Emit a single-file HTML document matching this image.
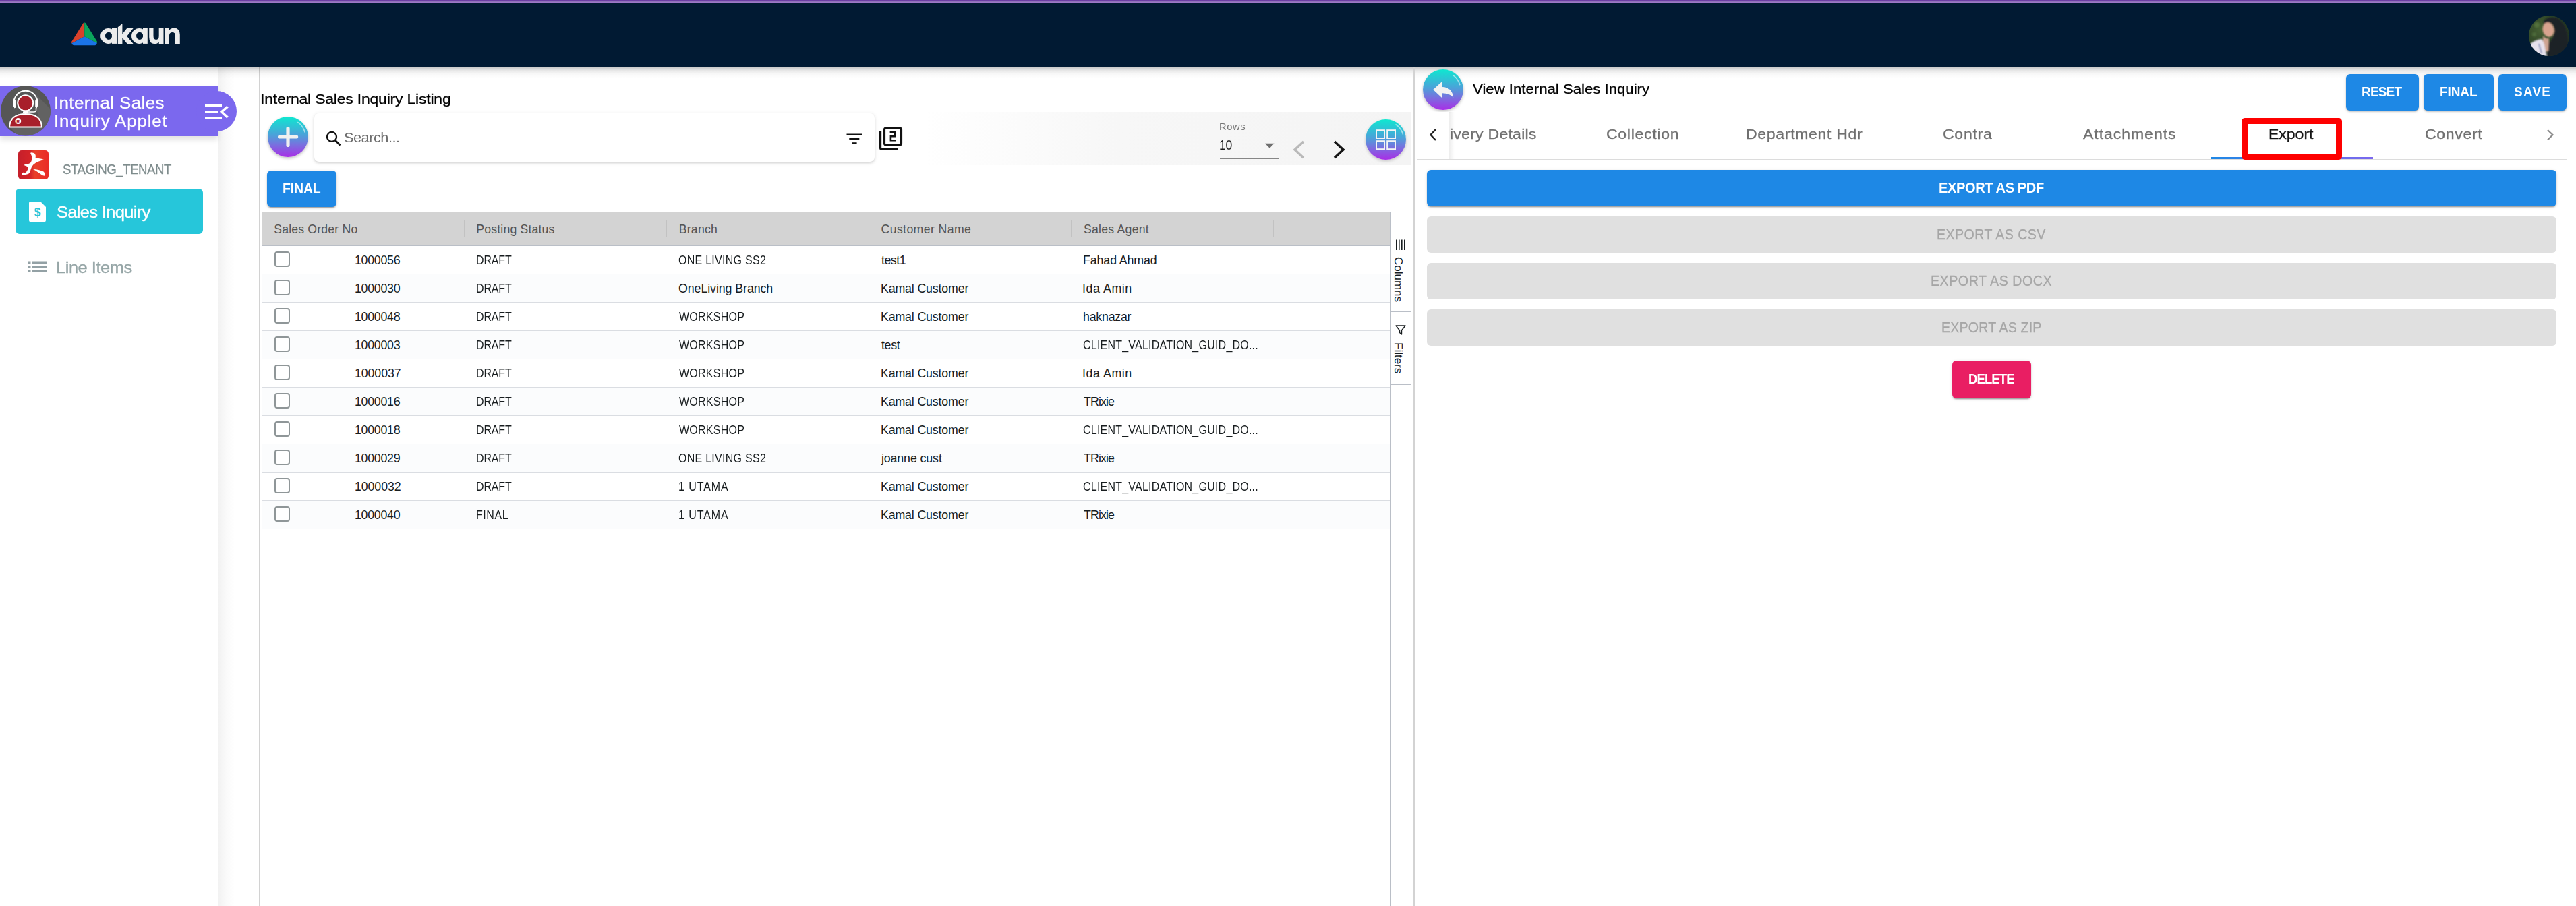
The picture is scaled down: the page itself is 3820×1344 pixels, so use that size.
<!DOCTYPE html>
<html><head><meta charset="utf-8">
<style>
*{box-sizing:border-box;margin:0;padding:0}
html,body{width:3820px;height:1344px;overflow:hidden;background:#fff;font-family:"Liberation Sans",sans-serif}
.a{position:absolute}
.t{position:absolute;white-space:nowrap;line-height:1}
.sx{display:inline-block;transform-origin:0 0}
#topline{left:0;top:0;width:3820px;height:4px;background:linear-gradient(#6b3ea3 0,#6b3ea3 1px,#9070b9 1px,#9070b9 3px,#9d77c8 3px)}
#hdr{left:0;top:4px;width:3820px;height:96px;background:#011a33}
#hdrshadow{left:0;top:100px;width:3820px;height:16px;background:linear-gradient(rgba(0,0,0,.21),rgba(0,0,0,.09) 30%,rgba(0,0,0,.03) 60%,rgba(0,0,0,0))}
#side{left:0;top:100px;width:324px;height:1244px;background:#fff;border-right:1px solid #d9d9d9}
#sideshadow{left:324px;top:100px;width:24px;height:1244px;background:linear-gradient(90deg,#f2f2f2,#fafafa 50%,#fff)}
#midline{left:384px;top:100px;width:1px;height:1244px;background:#d2d2d2}
.btn{position:absolute;background:#1e88e5;border-radius:6px;box-shadow:0 3px 1px -2px rgba(0,0,0,.2),0 2px 2px 0 rgba(0,0,0,.14),0 1px 5px 0 rgba(0,0,0,.12)}
.btxt{position:absolute;color:#fff;font-weight:bold;white-space:nowrap;line-height:1}
.hd{position:absolute;top:329px;font-size:18.5px;color:#585858;white-space:nowrap;line-height:1}
.cell{position:absolute;font-size:18.3px;color:#181d1f;white-space:nowrap;line-height:1}
.rowb{position:absolute;left:389px;width:1672px;height:42px;border-bottom:1px solid #dadde2}
.cb{position:absolute;left:407px;width:23px;height:23px;border:2px solid #8f9698;border-radius:4px;background:#fff}
.tab{position:absolute;top:189px;font-size:21.5px;color:#707070;white-space:nowrap;line-height:1}
.exb{position:absolute;left:2116px;width:1675px;height:54px;border-radius:6px;background:#e0e0e0}
.ext{position:absolute;font-size:22px;color:#a6a6a6;white-space:nowrap;line-height:1}
</style></head>
<body>
<div class="a" id="topline"></div>
<div class="a" id="hdr"></div>

<!-- logo -->
<svg class="a" style="left:100px;top:25px" width="180" height="50" viewBox="100 25 180 50">
  <path d="M125.2 33.6 L125.2 54.3 L106.4 64.3 Q105.6 63 106.6 61.2 L123.3 34.6 Q124.2 33.3 125.2 33.6 Z" fill="#d9412b"/>
  <path d="M125.2 33.6 Q126.3 33.3 127.1 34.6 L143.7 61.2 Q144.6 63 143.9 63.9 L125.2 54.3 Z" fill="#0ba55c"/>
  <path d="M125.2 54.3 L143.9 63.9 Q142.6 67.3 140 67.3 L110 67.3 Q107.2 67.3 106.4 64.3 Z" fill="#1b74e8"/>
  <g fill="#ececec">
  <path fill-rule="evenodd" d="M149.1 53.4 A11.4 11.5 0 1 0 171.9 53.4 A11.4 11.5 0 1 0 149.1 53.4 Z M155.9 53.3 A5.2 5.6 0 1 0 166.3 53.3 A5.2 5.6 0 1 0 155.9 53.3 Z"/>
  <rect x="165.9" y="41.9" width="7.2" height="23"/>
  <path d="M174.8 40.2 L181.4 34.9 L181.4 50.4 L188.2 41.9 L197.6 41.9 L188.2 53.8 L197.6 64.9 L188.7 64.9 L181.4 56.2 L181.4 64.9 L174.8 64.9 Z"/>
  <path fill-rule="evenodd" d="M195 53.4 A11.4 11.5 0 1 0 217.8 53.4 A11.4 11.5 0 1 0 195 53.4 Z M202 53.3 A5.1 5.6 0 1 0 212.2 53.3 A5.1 5.6 0 1 0 202 53.3 Z"/>
  <rect x="212" y="41.9" width="6.8" height="23"/>
  <path d="M221.2 41.9 L227.5 41.9 L227.5 53.5 Q227.5 58.9 231.6 58.9 Q235.7 58.9 235.7 53.5 L235.7 41.9 L242.5 41.9 L242.5 64.9 L235.7 64.9 L235.7 62 Q233.5 65.2 229.5 65.2 Q221.2 65.2 221.2 55 Z"/>
  <path d="M244.2 64.9 L244.2 41.9 L251 41.9 L251 44.8 Q253.2 41.6 257.3 41.6 Q266.8 41.6 266.8 51.5 L266.8 64.9 L260 64.9 L260 52.5 Q260 48 255.5 48 Q251 48 251 52.5 L251 64.9 Z"/>
  </g>
</svg>
<!-- avatar -->
<svg class="a" style="left:3750px;top:23px" width="60" height="60" viewBox="0 0 60 60">
  <defs><clipPath id="avc"><circle cx="30" cy="30" r="30"/></clipPath>
  <radialGradient id="fol" cx="0.3" cy="0.35" r="0.75"><stop offset="0" stop-color="#486234"/><stop offset="0.55" stop-color="#2f4527"/><stop offset="1" stop-color="#22331e"/></radialGradient>
  <filter id="blr"><feGaussianBlur stdDeviation="1.2"/></filter></defs>
  <g clip-path="url(#avc)">
    <rect x="0" y="0" width="60" height="60" fill="url(#fol)"/>
    <g filter="url(#blr)">
    <circle cx="12" cy="14" r="4" fill="#52703c"/><circle cx="8" cy="28" r="3" fill="#4e6b3a"/><circle cx="53" cy="24" r="3" fill="#4f6d3b"/>
    <path d="M22 8 Q32 -1 45 5 Q57 15 58 34 Q60 52 54 62 L26 62 Q29 50 28 42 Q36 36 38 26 Q39 14 32 11 Q26 10 22 14 Z" fill="#1e2125"/>
    <ellipse cx="29" cy="21" rx="8.5" ry="11" transform="rotate(-12 29 21)" fill="#d9a48f"/>
    <path d="M21 30 Q25 35 30 34 L29 52 Q25 56 21 50 Z" fill="#cfa390"/>
    <path d="M0 44 Q8 36 19 35 Q23 40 24 48 L27 62 L0 62 Z" fill="#e7e1ec"/>
    <path d="M15 42 L19 56" stroke="#5a6ea5" stroke-width="1.4"/>
    </g>
  </g>
</svg>
<!-- sidebar -->
<div class="a" id="side"></div>
<div class="a" id="sideshadow"></div>
<div class="a" id="midline"></div>

<div class="a" style="left:0;top:127px;width:323px;height:75px;background:#7b68ee;box-shadow:0 5px 8px rgba(0,0,0,.12)"></div>
<div class="a" style="left:291px;top:135px;width:60px;height:60px;border-radius:50%;background:#7b68ee"></div>
<svg class="a" style="left:0;top:120px" width="90" height="90" viewBox="0 0 90 90">
  <defs><clipPath id="apc"><circle cx="38" cy="44.3" r="37"/></clipPath></defs>
  <circle cx="38" cy="44.3" r="37" fill="#565656"/>
  <path clip-path="url(#apc)" d="M55 22 L95 62 L95 100 L45 100 L14 68.5 L62 68.5 L54 42 Z" fill="#626262"/>
</svg>
<svg class="a" style="left:0;top:120px" width="90" height="90" viewBox="0 0 90 90">
  <path d="M22.3 40 A17.5 17.5 0 1 1 53.7 40" fill="none" stroke="#fff" stroke-width="2"/>
  <rect x="20" y="28" width="3.4" height="11" rx="1.7" fill="#fff"/>
  <rect x="52.2" y="28" width="3.4" height="11" rx="1.7" fill="#fff"/>
  <circle cx="37.7" cy="32.8" r="11.5" fill="#a81f2a" stroke="#fff" stroke-width="2"/>
  <path d="M53.5 40 L53.5 44 Q53.5 46 50 46 L40 46" fill="none" stroke="#fff" stroke-width="1.5"/>
  <rect x="34" y="44.5" width="8" height="3.5" rx="1.7" fill="#fff"/>
  <path d="M14 68.5 Q15 49 38 49 Q61 49 62 68.5 Z" fill="#a81f2a" stroke="#fff" stroke-width="2"/>
  <circle cx="26.8" cy="59.6" r="4.5" fill="#fff"/>
  <text x="26.8" y="62.6" font-size="7" font-weight="bold" text-anchor="middle" fill="#a81f2a" font-family="Liberation Sans">R</text>
</svg>
<svg class="a" style="left:300px;top:150px" width="45" height="32" viewBox="0 0 45 32">
  <rect x="4" y="5" width="25" height="3.8" fill="#fff"/>
  <rect x="4" y="14" width="19.7" height="3.8" fill="#fff"/>
  <rect x="4" y="23" width="25" height="3.8" fill="#fff"/>
  <path d="M37.6 8.2 L28.5 15.9 L37.6 24.1" fill="none" stroke="#fff" stroke-width="3.6"/>
</svg>

<!-- tenant -->
<div class="a" style="left:27px;top:223px;width:45px;height:43px;border-radius:5px;background:linear-gradient(90deg,#c51f2b,#d42428 40%,#e9402a 55%,#ea2b27)"></div>
<svg class="a" style="left:27px;top:223px" width="45" height="43" viewBox="0 0 45 43">
  <path d="M18.8 3.3 Q23 3.6 24.1 4.6 Q26.5 7 25.5 11.9 L30.1 11.9 Q35 12.5 38 13.9 Q34.5 15 32.7 15.8 Q28.5 17 26.1 18.5 Q23 20.5 21.5 22.5 Q19.5 25 18.8 27.8 Q18 30.5 17.5 31.7 Q16.5 34 14.9 35 Q10 36.6 6.2 36.4 Q5.3 35.5 5.6 34.4 L7.6 32.4 L8.2 33.7 Q11 33 12.2 31.7 Q14 29 14.9 26.4 Q14.5 24.5 12.9 23.8 Q10 22.8 8.2 21.8 Q10.5 20.8 12.9 20.5 Q16.5 19.8 18.2 18.5 Q20 16 20.2 13.2 Q20.5 9.5 19.5 7.2 Q18.5 5.2 18.2 4.6 Z" fill="#fff"/>
  <path d="M22.1 28.1 Q26.5 28.3 30.1 29.1 Q35.5 30.3 38 31.7 Q40 34.5 40 37.7 Q38 37.8 36 37 Q33 35 30.1 33 Q26 30 22.1 28.1 Z" fill="#fff"/>
</svg>
<!-- sales inquiry -->
<div class="a" style="left:23px;top:280px;width:278px;height:67px;border-radius:6px;background:#26c6da"></div>
<svg class="a" style="left:43px;top:299px" width="26" height="30" viewBox="0 0 26 30">
  <path d="M2 0 L17 0 L25 8 L25 28 Q25 30 23 30 L2 30 Q0 30 0 28 L0 2 Q0 0 2 0 Z" fill="#fff"/>
  <text x="12.5" y="22.4" font-size="17.5" font-weight="bold" text-anchor="middle" fill="#26c6da" font-family="Liberation Sans">$</text>
</svg>

<!-- line items -->
<svg class="a" style="left:42px;top:387px" width="28" height="18" viewBox="0 0 28 18">
  <rect x="0" y="0.5" width="3.5" height="3.5" fill="#93a1a5"/><rect x="6" y="0.5" width="22" height="3.5" fill="#93a1a5"/>
  <rect x="0" y="7" width="3.5" height="3.5" fill="#93a1a5"/><rect x="6" y="7" width="22" height="3.5" fill="#93a1a5"/>
  <rect x="0" y="13.5" width="3.5" height="3.5" fill="#93a1a5"/><rect x="6" y="13.5" width="22" height="3.5" fill="#93a1a5"/>
</svg>

<div class="a" id="hdrshadow"></div>
<!-- listing panel -->
<!-- plus button -->
<div class="a" style="left:397px;top:173px;width:60px;height:60px;border-radius:50%;background:linear-gradient(#0ee8d0,#4aa3d9 45%,#7a6fdf 70%,#a82ee6);box-shadow:0 2px 4px rgba(0,0,0,.25)"></div>
<svg class="a" style="left:397px;top:173px" width="60" height="60" viewBox="0 0 60 60">
  <path d="M17.6 30 L42.6 30 M30 17.6 L30 42.4" stroke="#f0f0f0" stroke-width="5.2" stroke-linecap="round"/>
  <path d="M44.3 8.1 A25.5 25.5 0 0 1 55.1 23.5" fill="none" stroke="rgba(255,255,255,.55)" stroke-width="1.6"/>
</svg>
<!-- search -->
<div class="a" style="left:466px;top:168px;width:831px;height:72px;border-radius:7px;background:#fff;box-shadow:0 2px 4px -1px rgba(0,0,0,.2),0 1px 6px 0 rgba(0,0,0,.1)"></div>
<svg class="a" style="left:480px;top:192px" width="28" height="28" viewBox="0 0 28 28">
  <circle cx="12" cy="10.9" r="7" fill="none" stroke="#111" stroke-width="2.3"/>
  <path d="M17 16 L24.5 23.5" stroke="#111" stroke-width="2.6"/>
</svg>
<svg class="a" style="left:1250px;top:195px" width="34" height="22" viewBox="0 0 34 22">
  <rect x="5.5" y="3.5" width="22.6" height="2.3" fill="#111"/>
  <rect x="9.3" y="9.8" width="15" height="2.3" fill="#111"/>
  <rect x="13" y="16.2" width="7.6" height="2.3" fill="#111"/>
</svg>
<svg class="a" style="left:1300px;top:185px" width="42" height="40" viewBox="0 0 42 40">
  <rect x="11.5" y="5" width="25" height="25" rx="2.5" fill="none" stroke="#111" stroke-width="3.2"/>
  <path d="M5.6 9.6 L5.6 34.4 Q5.6 36 7.2 36 L31.3 36" fill="none" stroke="#111" stroke-width="3.2"/>
  <path d="M19.6 11.2 L26.8 11.2 L26.8 17.2 L20.9 17.2 L20.9 23.2 L28 23.2" fill="none" stroke="#111" stroke-width="2.6"/>
</svg>
<!-- pagination band -->
<div class="a" style="left:1370px;top:166px;width:723px;height:79px;background:linear-gradient(90deg,rgba(245,245,245,0),#f7f7f7 40%,#f4f4f4)"></div>
<svg class="a" style="left:1870px;top:208px" width="24" height="16" viewBox="0 0 24 16"><path d="M6 4.8 L19.6 4.8 L12.8 11.8 Z" fill="#6f6f6f"/></svg>
<div class="a" style="left:1809px;top:234px;width:87px;height:2px;background:#868686"></div>
<svg class="a" style="left:1910px;top:205px" width="30" height="34" viewBox="0 0 30 34"><path d="M23 5 L10 17 L23 29" fill="none" stroke="#b9b9b9" stroke-width="3.6"/></svg>
<svg class="a" style="left:1970px;top:205px" width="30" height="34" viewBox="0 0 30 34"><path d="M9 5 L22 17 L9 29" fill="none" stroke="#151515" stroke-width="3.6"/></svg>
<div class="a" style="left:2025px;top:176.5px;width:60px;height:60px;border-radius:50%;background:linear-gradient(#0ee8d0,#4aa3d9 45%,#7a6fdf 70%,#a82ee6);box-shadow:0 2px 4px rgba(0,0,0,.2)"></div>
<svg class="a" style="left:2025px;top:176px" width="61" height="61" viewBox="0 0 61 61">
  <rect x="16.1" y="17.1" width="12" height="12" fill="none" stroke="#f4f4f4" stroke-width="1.8"/>
  <rect x="32.1" y="17.1" width="12" height="12" fill="none" stroke="#f4f4f4" stroke-width="1.8"/>
  <rect x="16.1" y="33.1" width="12" height="12" fill="none" stroke="#f4f4f4" stroke-width="1.8"/>
  <rect x="32.1" y="33.1" width="12" height="12" fill="none" stroke="#f4f4f4" stroke-width="1.8"/>
  <path d="M44.5 8.5 A25.5 25.5 0 0 1 55.5 23.5" fill="none" stroke="rgba(255,255,255,.55)" stroke-width="1.6"/>
</svg>
<!-- FINAL button -->
<div class="btn" style="left:396px;top:253px;width:103px;height:54px"></div>

<!-- table -->
<div class="a" style="left:388px;top:314px;width:1705px;height:1030px;border:1px solid #babfc7;border-bottom:none"></div>
<div class="a" style="left:389px;top:315px;width:1672px;height:50px;background:#d3d3d3;border-bottom:1px solid #babfc7"></div>
<div class="a" style="left:688px;top:327px;width:1px;height:24px;background:#c2c2c2"></div>
<div class="a" style="left:988px;top:327px;width:1px;height:24px;background:#c2c2c2"></div>
<div class="a" style="left:1288px;top:327px;width:1px;height:24px;background:#c2c2c2"></div>
<div class="a" style="left:1588px;top:327px;width:1px;height:24px;background:#c2c2c2"></div>
<div class="a" style="left:1888px;top:327px;width:1px;height:24px;background:#c2c2c2"></div>
<!-- side bar -->
<div class="a" style="left:2061px;top:315px;width:1px;height:1029px;background:#babfc7"></div>
<div class="a" style="left:2062px;top:339px;width:30px;height:1px;background:#babfc7"></div>
<div class="a" style="left:2062px;top:462px;width:30px;height:1px;background:#babfc7"></div>
<div class="a" style="left:2062px;top:570px;width:30px;height:1px;background:#babfc7"></div>
<svg class="a" style="left:2062px;top:340px" width="30" height="232" viewBox="0 0 30 232">
  <rect x="8" y="15.5" width="1.6" height="15.5" fill="#181d1f"/>
  <rect x="12" y="15.5" width="1.6" height="15.5" fill="#181d1f"/>
  <rect x="16" y="15.5" width="1.6" height="15.5" fill="#181d1f"/>
  <rect x="20" y="15.5" width="1.6" height="15.5" fill="#181d1f"/>
  <path d="M8 143 L22 143 L16.5 150 L16.5 156 L13.5 153.5 L13.5 150 Z" fill="none" stroke="#181d1f" stroke-width="1.4" stroke-linejoin="round"/>
</svg>
<div class="rowb" style="top:365px;background:#fff"></div>
<div class="cb" style="top:373px"></div>
<div class="rowb" style="top:407px;background:#fbfcfd"></div>
<div class="cb" style="top:415px"></div>
<div class="rowb" style="top:449px;background:#fff"></div>
<div class="cb" style="top:457px"></div>
<div class="rowb" style="top:491px;background:#fbfcfd"></div>
<div class="cb" style="top:499px"></div>
<div class="rowb" style="top:533px;background:#fff"></div>
<div class="cb" style="top:541px"></div>
<div class="rowb" style="top:575px;background:#fbfcfd"></div>
<div class="cb" style="top:583px"></div>
<div class="rowb" style="top:617px;background:#fff"></div>
<div class="cb" style="top:625px"></div>
<div class="rowb" style="top:659px;background:#fbfcfd"></div>
<div class="cb" style="top:667px"></div>
<div class="rowb" style="top:701px;background:#fff"></div>
<div class="cb" style="top:709px"></div>
<div class="rowb" style="top:743px;background:#fbfcfd"></div>
<div class="cb" style="top:751px"></div>

<!-- right panel -->
<div class="a" style="left:2096px;top:100px;width:2px;height:1244px;background:#d3d3d3"></div>
<div class="a" style="left:3809px;top:100px;width:1px;height:1244px;background:#cfcfcf"></div>
<!-- back button -->
<div class="a" style="left:2110px;top:103px;width:60px;height:60px;border-radius:50%;background:linear-gradient(#0ee8d0,#4aa3d9 45%,#7a6fdf 70%,#a82ee6);box-shadow:0 2px 4px rgba(0,0,0,.25)"></div>
<svg class="a" style="left:2110px;top:103px" width="60" height="60" viewBox="0 0 60 60">
  <path d="M15.2 30 L28.9 17.6 L28.9 26 Q43 26.5 45.2 41.4 Q39 35.3 28.9 35.3 L28.9 42.8 Z" fill="#f2f2f2"/>
  <path d="M44.3 8.3 A25 25 0 0 1 54.9 23.3" fill="none" stroke="rgba(255,255,255,.55)" stroke-width="1.6"/>
</svg>
<!-- top buttons -->
<div class="btn" style="left:3479px;top:110px;width:108px;height:54px"></div>
<div class="btn" style="left:3594px;top:110px;width:104px;height:54px"></div>
<div class="btn" style="left:3705px;top:110px;width:101px;height:54px"></div>
<!-- tabs -->
<div class="a" style="left:2101px;top:236px;width:1705px;height:1px;background:#dcdcdc"></div>
<div class="a" style="left:2101px;top:166px;width:48px;height:70px;background:#fff;z-index:5"></div><div class="a" style="left:2149px;top:166px;width:8px;height:70px;background:linear-gradient(90deg,rgba(0,0,0,.07),rgba(0,0,0,0));z-index:5"></div>
<svg class="a" style="left:2112px;top:188px;z-index:6" width="24" height="24" viewBox="0 0 24 24"><path d="M17 4 L9.5 12 L17 20" fill="none" stroke="#222" stroke-width="2.4"/></svg>
<svg class="a" style="left:3770px;top:188px" width="24" height="24" viewBox="0 0 24 24"><path d="M8 5 L15.5 12 L8 19.5" fill="none" stroke="#8a8a8a" stroke-width="2.2"/></svg>
<div class="a" style="left:3278px;top:233px;width:241px;height:3px;background:linear-gradient(90deg,#1e88e5,#7b68ee)"></div>
<div class="a" style="left:3324px;top:175px;width:149px;height:62px;border:9px solid #fe0000;border-radius:5px"></div>
<!-- export buttons -->
<div class="exb" style="top:252px;background:#1e88e5;box-shadow:0 3px 1px -2px rgba(0,0,0,.2),0 2px 2px 0 rgba(0,0,0,.14),0 1px 5px 0 rgba(0,0,0,.12)"></div>
<div class="exb" style="top:321px"></div>
<div class="exb" style="top:390px"></div>
<div class="exb" style="top:459px"></div>
<div class="btn" style="left:2895px;top:535px;width:117px;height:56px;background:#e91e63"></div>

<div class="t" style="left:80.40px;top:141.84px;font-size:23.5px;font-weight:normal;color:#fff;-webkit-text-stroke:0.3px #fff;"><span class="sx" style="transform:scaleX(1.1);letter-spacing:0.371px">Internal Sales</span></div>
<div class="t" style="left:80.40px;top:169.04px;font-size:23.5px;font-weight:normal;color:#fff;-webkit-text-stroke:0.3px #fff;"><span class="sx" style="transform:scaleX(1.1);letter-spacing:0.769px">Inquiry Applet</span></div>
<div class="t" style="left:92.55px;top:242.40px;font-size:19.6px;font-weight:normal;color:#7f8c8d;-webkit-text-stroke:0.3px #7f8c8d;"><span class="sx" style="transform:scaleX(0.95);letter-spacing:-0.466px">STAGING_TENANT</span></div>
<div class="t" style="left:84.40px;top:303.96px;font-size:23.3px;font-weight:normal;color:#fff;-webkit-text-stroke:0.3px #fff;"><span class="sx" style="transform:scaleX(1.1);letter-spacing:-0.674px">Sales Inquiry</span></div>
<div class="t" style="left:83.30px;top:385.97px;font-size:23.2px;font-weight:normal;color:#95a5a6;-webkit-text-stroke:0.3px #95a5a6;"><span class="sx" style="transform:scaleX(1.1);letter-spacing:-0.444px">Line Items</span></div>
<div class="t" style="left:386.40px;top:137.14px;font-size:20.9px;font-weight:normal;color:#000;-webkit-text-stroke:0.3px #000;"><span class="sx" style="transform:scaleX(1.1);letter-spacing:-0.188px">Internal Sales Inquiry Listing</span></div>
<div class="t" style="left:510.42px;top:194.23px;font-size:20.2px;font-weight:normal;color:#6e6e6e;"><span class="sx" style="transform:scaleX(1.08);letter-spacing:-0.491px">Search...</span></div>
<div class="t" style="left:1807.95px;top:181.35px;font-size:14px;font-weight:normal;color:#757575;"><span class="sx" style="transform:scaleX(1.05);letter-spacing:0.571px">Rows</span></div>
<div class="t" style="left:1808.10px;top:206.31px;font-size:19.5px;font-weight:normal;color:#1a1a1a;"><span class="sx" style="transform:scaleX(0.9);letter-spacing:-0.222px">10</span></div>
<div class="t" style="left:418.70px;top:269.05px;font-size:21.7px;font-weight:bold;color:#fff;"><span class="sx" style="transform:scaleX(0.9);letter-spacing:-0.194px">FINAL</span></div>
<div class="t" style="left:406.20px;top:332.32px;font-size:17.7px;font-weight:normal;color:#545454;"><span class="sx" style="transform:scaleX(1.0);letter-spacing:0.169px">Sales Order No</span></div>
<div class="t" style="left:706.30px;top:332.32px;font-size:17.7px;font-weight:normal;color:#545454;"><span class="sx" style="transform:scaleX(1.0);letter-spacing:0.162px">Posting Status</span></div>
<div class="t" style="left:1006.70px;top:332.32px;font-size:17.7px;font-weight:normal;color:#545454;"><span class="sx" style="transform:scaleX(1.0);letter-spacing:0.240px">Branch</span></div>
<div class="t" style="left:1306.50px;top:332.32px;font-size:17.7px;font-weight:normal;color:#545454;"><span class="sx" style="transform:scaleX(1.0);letter-spacing:0.383px">Customer Name</span></div>
<div class="t" style="left:1607.00px;top:332.32px;font-size:17.7px;font-weight:normal;color:#545454;"><span class="sx" style="transform:scaleX(1.0);letter-spacing:0.230px">Sales Agent</span></div>
<div class="t" style="left:526.00px;top:378.11px;font-size:17.8px;font-weight:normal;color:#181d1f;"><span class="sx" style="transform:scaleX(1.0);letter-spacing:-0.267px">1000056</span></div>
<div class="t" style="left:706.10px;top:378.11px;font-size:17.8px;font-weight:normal;color:#181d1f;"><span class="sx" style="transform:scaleX(0.9);letter-spacing:-0.167px">DRAFT</span></div>
<div class="t" style="left:1006.10px;top:378.11px;font-size:17.8px;font-weight:normal;color:#181d1f;"><span class="sx" style="transform:scaleX(0.9);letter-spacing:0.299px">ONE LIVING SS2</span></div>
<div class="t" style="left:1307.00px;top:378.11px;font-size:17.8px;font-weight:normal;color:#181d1f;"><span class="sx" style="transform:scaleX(1.0);letter-spacing:-0.500px">test1</span></div>
<div class="t" style="left:1606.00px;top:378.11px;font-size:17.8px;font-weight:normal;color:#181d1f;"><span class="sx" style="transform:scaleX(1.0);letter-spacing:-0.100px">Fahad Ahmad</span></div>
<div class="t" style="left:526.00px;top:420.11px;font-size:17.8px;font-weight:normal;color:#181d1f;"><span class="sx" style="transform:scaleX(1.0);letter-spacing:-0.267px">1000030</span></div>
<div class="t" style="left:706.10px;top:420.11px;font-size:17.8px;font-weight:normal;color:#181d1f;"><span class="sx" style="transform:scaleX(0.9);letter-spacing:-0.167px">DRAFT</span></div>
<div class="t" style="left:1006.00px;top:420.11px;font-size:17.8px;font-weight:normal;color:#181d1f;"><span class="sx" style="transform:scaleX(1.0);letter-spacing:-0.073px">OneLiving Branch</span></div>
<div class="t" style="left:1306.00px;top:420.11px;font-size:17.8px;font-weight:normal;color:#181d1f;"><span class="sx" style="transform:scaleX(1.0);letter-spacing:-0.154px">Kamal Customer</span></div>
<div class="t" style="left:1605.00px;top:420.11px;font-size:17.8px;font-weight:normal;color:#181d1f;"><span class="sx" style="transform:scaleX(1.0);letter-spacing:0.571px">Ida Amin</span></div>
<div class="t" style="left:526.00px;top:462.11px;font-size:17.8px;font-weight:normal;color:#181d1f;"><span class="sx" style="transform:scaleX(1.0);letter-spacing:-0.267px">1000048</span></div>
<div class="t" style="left:706.10px;top:462.11px;font-size:17.8px;font-weight:normal;color:#181d1f;"><span class="sx" style="transform:scaleX(0.9);letter-spacing:-0.167px">DRAFT</span></div>
<div class="t" style="left:1007.00px;top:462.11px;font-size:17.8px;font-weight:normal;color:#181d1f;"><span class="sx" style="transform:scaleX(0.9);letter-spacing:0.270px">WORKSHOP</span></div>
<div class="t" style="left:1306.00px;top:462.11px;font-size:17.8px;font-weight:normal;color:#181d1f;"><span class="sx" style="transform:scaleX(1.0);letter-spacing:-0.154px">Kamal Customer</span></div>
<div class="t" style="left:1606.00px;top:462.11px;font-size:17.8px;font-weight:normal;color:#181d1f;"><span class="sx" style="transform:scaleX(1.0);letter-spacing:-0.229px">haknazar</span></div>
<div class="t" style="left:526.00px;top:504.11px;font-size:17.8px;font-weight:normal;color:#181d1f;"><span class="sx" style="transform:scaleX(1.0);letter-spacing:-0.267px">1000003</span></div>
<div class="t" style="left:706.10px;top:504.11px;font-size:17.8px;font-weight:normal;color:#181d1f;"><span class="sx" style="transform:scaleX(0.9);letter-spacing:-0.167px">DRAFT</span></div>
<div class="t" style="left:1007.00px;top:504.11px;font-size:17.8px;font-weight:normal;color:#181d1f;"><span class="sx" style="transform:scaleX(0.9);letter-spacing:0.270px">WORKSHOP</span></div>
<div class="t" style="left:1307.00px;top:504.11px;font-size:17.8px;font-weight:normal;color:#181d1f;"><span class="sx" style="transform:scaleX(1.0);letter-spacing:-0.333px">test</span></div>
<div class="t" style="left:1606.10px;top:504.11px;font-size:17.8px;font-weight:normal;color:#181d1f;"><span class="sx" style="transform:scaleX(0.9);letter-spacing:0.247px">CLIENT_VALIDATION_GUID_DO...</span></div>
<div class="t" style="left:526.00px;top:546.11px;font-size:17.8px;font-weight:normal;color:#181d1f;"><span class="sx" style="transform:scaleX(1.0);letter-spacing:-0.100px">1000037</span></div>
<div class="t" style="left:706.10px;top:546.11px;font-size:17.8px;font-weight:normal;color:#181d1f;"><span class="sx" style="transform:scaleX(0.9);letter-spacing:-0.167px">DRAFT</span></div>
<div class="t" style="left:1007.00px;top:546.11px;font-size:17.8px;font-weight:normal;color:#181d1f;"><span class="sx" style="transform:scaleX(0.9);letter-spacing:0.270px">WORKSHOP</span></div>
<div class="t" style="left:1306.00px;top:546.11px;font-size:17.8px;font-weight:normal;color:#181d1f;"><span class="sx" style="transform:scaleX(1.0);letter-spacing:-0.154px">Kamal Customer</span></div>
<div class="t" style="left:1605.00px;top:546.11px;font-size:17.8px;font-weight:normal;color:#181d1f;"><span class="sx" style="transform:scaleX(1.0);letter-spacing:0.571px">Ida Amin</span></div>
<div class="t" style="left:526.00px;top:588.11px;font-size:17.8px;font-weight:normal;color:#181d1f;"><span class="sx" style="transform:scaleX(1.0);letter-spacing:-0.267px">1000016</span></div>
<div class="t" style="left:706.10px;top:588.11px;font-size:17.8px;font-weight:normal;color:#181d1f;"><span class="sx" style="transform:scaleX(0.9);letter-spacing:-0.167px">DRAFT</span></div>
<div class="t" style="left:1007.00px;top:588.11px;font-size:17.8px;font-weight:normal;color:#181d1f;"><span class="sx" style="transform:scaleX(0.9);letter-spacing:0.270px">WORKSHOP</span></div>
<div class="t" style="left:1306.00px;top:588.11px;font-size:17.8px;font-weight:normal;color:#181d1f;"><span class="sx" style="transform:scaleX(1.0);letter-spacing:-0.154px">Kamal Customer</span></div>
<div class="t" style="left:1607.00px;top:588.11px;font-size:17.8px;font-weight:normal;color:#181d1f;"><span class="sx" style="transform:scaleX(1.0);letter-spacing:-0.880px">TRixie</span></div>
<div class="t" style="left:526.00px;top:630.11px;font-size:17.8px;font-weight:normal;color:#181d1f;"><span class="sx" style="transform:scaleX(1.0);letter-spacing:-0.267px">1000018</span></div>
<div class="t" style="left:706.10px;top:630.11px;font-size:17.8px;font-weight:normal;color:#181d1f;"><span class="sx" style="transform:scaleX(0.9);letter-spacing:-0.167px">DRAFT</span></div>
<div class="t" style="left:1007.00px;top:630.11px;font-size:17.8px;font-weight:normal;color:#181d1f;"><span class="sx" style="transform:scaleX(0.9);letter-spacing:0.270px">WORKSHOP</span></div>
<div class="t" style="left:1306.00px;top:630.11px;font-size:17.8px;font-weight:normal;color:#181d1f;"><span class="sx" style="transform:scaleX(1.0);letter-spacing:-0.154px">Kamal Customer</span></div>
<div class="t" style="left:1606.10px;top:630.11px;font-size:17.8px;font-weight:normal;color:#181d1f;"><span class="sx" style="transform:scaleX(0.9);letter-spacing:0.247px">CLIENT_VALIDATION_GUID_DO...</span></div>
<div class="t" style="left:526.00px;top:672.11px;font-size:17.8px;font-weight:normal;color:#181d1f;"><span class="sx" style="transform:scaleX(1.0);letter-spacing:-0.267px">1000029</span></div>
<div class="t" style="left:706.10px;top:672.11px;font-size:17.8px;font-weight:normal;color:#181d1f;"><span class="sx" style="transform:scaleX(0.9);letter-spacing:-0.167px">DRAFT</span></div>
<div class="t" style="left:1006.10px;top:672.11px;font-size:17.8px;font-weight:normal;color:#181d1f;"><span class="sx" style="transform:scaleX(0.9);letter-spacing:0.299px">ONE LIVING SS2</span></div>
<div class="t" style="left:1306.90px;top:672.11px;font-size:17.8px;font-weight:normal;color:#181d1f;"><span class="sx" style="transform:scaleX(1.0);letter-spacing:-0.100px">joanne cust</span></div>
<div class="t" style="left:1607.00px;top:672.11px;font-size:17.8px;font-weight:normal;color:#181d1f;"><span class="sx" style="transform:scaleX(1.0);letter-spacing:-0.880px">TRixie</span></div>
<div class="t" style="left:526.00px;top:714.11px;font-size:17.8px;font-weight:normal;color:#181d1f;"><span class="sx" style="transform:scaleX(1.0);letter-spacing:-0.100px">1000032</span></div>
<div class="t" style="left:706.10px;top:714.11px;font-size:17.8px;font-weight:normal;color:#181d1f;"><span class="sx" style="transform:scaleX(0.9);letter-spacing:-0.167px">DRAFT</span></div>
<div class="t" style="left:1006.10px;top:714.11px;font-size:17.8px;font-weight:normal;color:#181d1f;"><span class="sx" style="transform:scaleX(0.9);letter-spacing:1.019px">1 UTAMA</span></div>
<div class="t" style="left:1306.00px;top:714.11px;font-size:17.8px;font-weight:normal;color:#181d1f;"><span class="sx" style="transform:scaleX(1.0);letter-spacing:-0.154px">Kamal Customer</span></div>
<div class="t" style="left:1606.10px;top:714.11px;font-size:17.8px;font-weight:normal;color:#181d1f;"><span class="sx" style="transform:scaleX(0.9);letter-spacing:0.247px">CLIENT_VALIDATION_GUID_DO...</span></div>
<div class="t" style="left:526.00px;top:756.11px;font-size:17.8px;font-weight:normal;color:#181d1f;"><span class="sx" style="transform:scaleX(1.0);letter-spacing:-0.267px">1000040</span></div>
<div class="t" style="left:706.10px;top:756.11px;font-size:17.8px;font-weight:normal;color:#181d1f;"><span class="sx" style="transform:scaleX(0.9);letter-spacing:0.639px">FINAL</span></div>
<div class="t" style="left:1006.10px;top:756.11px;font-size:17.8px;font-weight:normal;color:#181d1f;"><span class="sx" style="transform:scaleX(0.9);letter-spacing:1.019px">1 UTAMA</span></div>
<div class="t" style="left:1306.00px;top:756.11px;font-size:17.8px;font-weight:normal;color:#181d1f;"><span class="sx" style="transform:scaleX(1.0);letter-spacing:-0.154px">Kamal Customer</span></div>
<div class="t" style="left:1607.00px;top:756.11px;font-size:17.8px;font-weight:normal;color:#181d1f;"><span class="sx" style="transform:scaleX(1.0);letter-spacing:-0.880px">TRixie</span></div>
<div class="t" style="left:2184.00px;top:121.63px;font-size:20.2px;font-weight:normal;color:#000;-webkit-text-stroke:0.3px #000;"><span class="sx" style="transform:scaleX(1.1);letter-spacing:-0.017px">View Internal Sales Inquiry</span></div>
<div class="t" style="left:3502.10px;top:125.02px;font-size:21.1px;font-weight:bold;color:#fff;"><span class="sx" style="transform:scaleX(0.9);letter-spacing:-0.917px">RESET</span></div>
<div class="t" style="left:3617.70px;top:125.02px;font-size:21.1px;font-weight:bold;color:#fff;"><span class="sx" style="transform:scaleX(0.9);letter-spacing:-0.083px">FINAL</span></div>
<div class="t" style="left:3728.30px;top:125.02px;font-size:21.1px;font-weight:bold;color:#fff;"><span class="sx" style="transform:scaleX(0.9);letter-spacing:1.370px">SAVE</span></div>
<div class="t" style="left:2149.88px;top:189.38px;font-size:20.6px;font-weight:normal;color:#707070;-webkit-text-stroke:0.3px #707070;"><span class="sx" style="transform:scaleX(1.12);letter-spacing:0.208px">ivery Details</span></div>
<div class="t" style="left:2382.48px;top:189.38px;font-size:20.6px;font-weight:normal;color:#707070;-webkit-text-stroke:0.3px #707070;"><span class="sx" style="transform:scaleX(1.12);letter-spacing:0.619px">Collection</span></div>
<div class="t" style="left:2589.36px;top:189.38px;font-size:20.6px;font-weight:normal;color:#707070;-webkit-text-stroke:0.3px #707070;"><span class="sx" style="transform:scaleX(1.12);letter-spacing:0.592px">Department Hdr</span></div>
<div class="t" style="left:2880.68px;top:189.38px;font-size:20.6px;font-weight:normal;color:#707070;-webkit-text-stroke:0.3px #707070;"><span class="sx" style="transform:scaleX(1.12);letter-spacing:0.639px">Contra</span></div>
<div class="t" style="left:3088.70px;top:189.38px;font-size:20.6px;font-weight:normal;color:#707070;-webkit-text-stroke:0.3px #707070;"><span class="sx" style="transform:scaleX(1.12);letter-spacing:0.832px">Attachments</span></div>
<div class="t" style="left:3363.76px;top:189.38px;font-size:20.6px;font-weight:normal;color:#141414;-webkit-text-stroke:0.3px #141414;"><span class="sx" style="transform:scaleX(1.12);letter-spacing:-0.043px">Export</span></div>
<div class="t" style="left:3595.88px;top:189.38px;font-size:20.6px;font-weight:normal;color:#707070;-webkit-text-stroke:0.3px #707070;"><span class="sx" style="transform:scaleX(1.12);letter-spacing:0.592px">Convert</span></div>
<div class="t" style="left:2875.38px;top:268.44px;font-size:21.8px;font-weight:bold;color:#fff;"><span class="sx" style="transform:scaleX(0.92);letter-spacing:-0.422px">EXPORT AS PDF</span></div>
<div class="t" style="left:2872.20px;top:336.74px;font-size:21.8px;font-weight:normal;color:#a6a6a6;-webkit-text-stroke:0.3px #a6a6a6;"><span class="sx" style="transform:scaleX(0.9);letter-spacing:0.472px">EXPORT AS CSV</span></div>
<div class="t" style="left:2863.20px;top:405.74px;font-size:21.8px;font-weight:normal;color:#a6a6a6;-webkit-text-stroke:0.3px #a6a6a6;"><span class="sx" style="transform:scaleX(0.9);letter-spacing:0.590px">EXPORT AS DOCX</span></div>
<div class="t" style="left:2879.20px;top:474.74px;font-size:21.8px;font-weight:normal;color:#a6a6a6;-webkit-text-stroke:0.3px #a6a6a6;"><span class="sx" style="transform:scaleX(0.9);letter-spacing:0.185px">EXPORT AS ZIP</span></div>
<div class="t" style="left:2918.70px;top:552.08px;font-size:20.6px;font-weight:bold;color:#fff;"><span class="sx" style="transform:scaleX(0.9);letter-spacing:-1.022px">DELETE</span></div>
<div class="t" style="left:2082px;top:381px;font-size:17px;color:#181d1f;transform:rotate(90deg);transform-origin:0 0">Columns</div>
<div class="t" style="left:2082px;top:508px;font-size:17px;color:#181d1f;transform:rotate(90deg);transform-origin:0 0">Filters</div>
</body></html>
